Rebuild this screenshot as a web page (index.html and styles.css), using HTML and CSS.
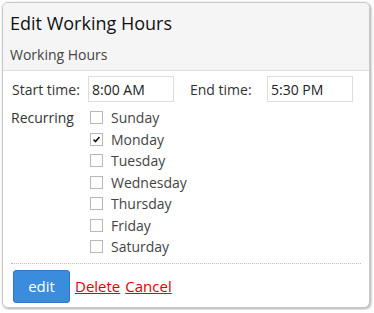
FILE: index.html
```html
<!DOCTYPE html>
<html lang="en">
<head>
    <meta charset="UTF-8">
    <title>Edit Working Hours</title>
    <link rel="stylesheet" href="styles.css">
</head>
<body>

    <div class="dialog">
        <div class="dialogHead">
            <h1>Edit Working Hours</h1>
            <h2>Working Hours</h2>
        </div>

        <div class="dialogBody">
            <div class="timeRow">
                <label for="startTime">Start time:</label>
                <input type="text" id="startTime" value="8:00 AM">
                <label for="endTime" class="endLabel">End time:</label>
                <input type="text" id="endTime" value="5:30 PM">
            </div>

            <div class="recurRow">
                <span class="recurLabel">Recurring</span>
                <div class="days">
                    <label class="day"><span class="box"></span>Sunday</label>
                    <label class="day"><span class="box"><svg viewBox="0 0 13 13" width="13" height="13"><path d="M3 6.5 L5.3 9 L10 3.5" fill="none" stroke="#111" stroke-width="1.8"/></svg></span>Monday</label>
                    <label class="day"><span class="box"></span>Tuesday</label>
                    <label class="day"><span class="box"></span>Wednesday</label>
                    <label class="day"><span class="box"></span>Thursday</label>
                    <label class="day"><span class="box"></span>Friday</label>
                    <label class="day"><span class="box"></span>Saturday</label>
                </div>
            </div>

            <div class="actions">
                <button class="editBtn">edit</button>
                <a href="#" class="link">Delete</a>
                <a href="#" class="link">Cancel</a>
            </div>
        </div>
    </div>

</body>
</html>
```

FILE: styles.css
```css
body {
    margin: 0;
    padding: 2px;
    background-color: #fff;
    font-family: "Open Sans", "Noto Sans", sans-serif;
    color: #333;
}
.dialog {
    width: 366px;
    height: 304px;
    border: 1px solid #c8c8c8;
    border-radius: 6px;
    box-shadow: 1px 1px 3px rgba(0, 0, 0, 0.35);
    overflow: hidden;
    background-color: #fff;
}
.dialogHead {
    background-color: #f5f5f5;
    border-bottom: 1px solid #ddd;
    height: 67px;
    padding: 0 7px;
}
h1 {
    margin: 0;
    padding-top: 8px;
    font-size: 18px;
    font-weight: normal;
    color: #111;
    line-height: 25px;
}
h2 {
    margin: 0;
    padding-top: 9px;
    font-size: 14px;
    font-weight: normal;
    color: #444;
    line-height: 20px;
}
.dialogBody {
    padding: 5px 8px 0 8px;
}
.timeRow {
    display: flex;
    align-items: center;
    font-size: 14px;
}
.timeRow label {
    width: 77px;
}
.timeRow label:first-child {
    padding-left: 1px;
    width: 76px;
}
.timeRow .endLabel {
    margin-left: 16px;
}
.timeRow input {
    width: 78px;
    height: 20px;
    padding: 2px 3px;
    border: 1px solid #ddd;
    font-family: "Open Sans", "Noto Sans", sans-serif;
    font-size: 14px;
    color: #222;
    outline: none;
}
.recurRow {
    display: flex;
    margin-top: 5px;
    font-size: 14px;
}
.recurLabel {
    width: 79px;
    line-height: 21px;
}
.days {
    display: flex;
    flex-direction: column;
}
.day {
    display: flex;
    align-items: center;
    height: 21.5px;
    color: #444;
}
.box {
    width: 11px;
    height: 11px;
    border: 1px solid #b8b8b8;
    margin-right: 8px;
    display: flex;
}
.box svg {
    width: 11px;
    height: 11px;
}
.actions {
    margin-top: 5px;
    border-top: 1px dotted #bbb;
    padding-top: 6px;
    display: flex;
    align-items: center;
}
.editBtn {
    width: 57px;
    height: 33px;
    margin-left: 2px;
    background-color: #3b8cdc;
    border: 1px solid #2f78c4;
    border-radius: 3px;
    color: white;
    font-family: "Open Sans", "Noto Sans", sans-serif;
    font-size: 15px;
    cursor: pointer;
}
.link {
    color: #e00000;
    font-size: 15px;
    margin-left: 5px;
}
```
